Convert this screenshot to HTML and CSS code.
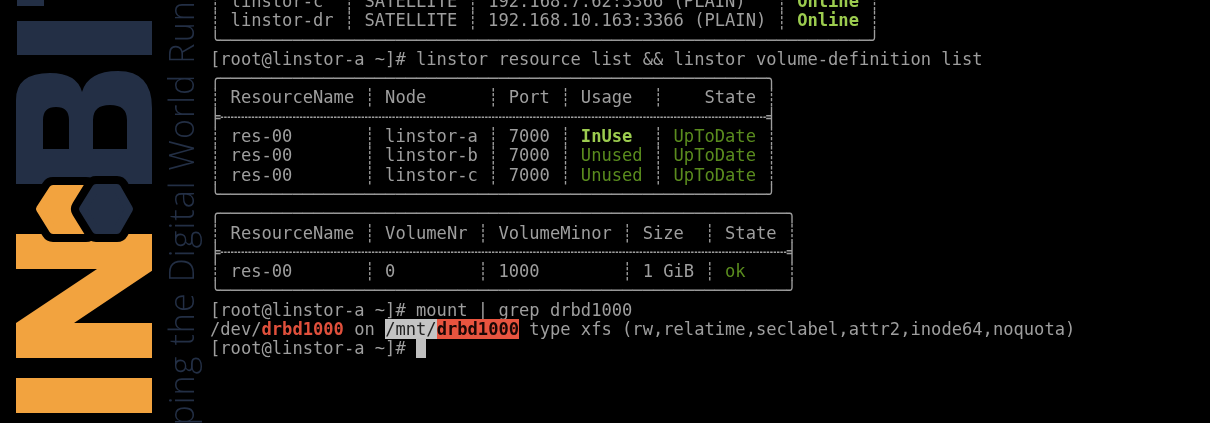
FILE: index.html
```
<!DOCTYPE html>
<html lang="en">
<head>
<meta charset="utf-8">
<title>LINSTOR terminal</title>
<link rel="stylesheet" href="styles.css">
</head>
<body>
<div class="screen">
<aside class="brand">
<svg class="logo" width="210" height="423" viewBox="0 0 210 423">
<rect class="navy" x="17" y="-10" width="27" height="16"/>
<rect class="navy" x="17" y="21" width="135" height="34"/>
<path class="navy" fill-rule="evenodd" d="M16 184V100Q16 73 50 73Q77 73 82 92Q88 71 118 71Q152 71 152 108V184ZM43 149H69V120Q69 107 56 107Q43 107 43 120ZM93 149H127V120Q127 105 110 105Q93 105 93 120Z"/>
<path class="orange" d="M16 234H152V270.700L74 323H152V358H16V323L97 269H16Z"/>
<rect class="orange" x="16" y="378" width="136" height="35"/>
<path class="halo" d="M40 209L53 189H86L98 209L86 230H53Z"/>
<path class="orange soft" d="M40 209L53 189H86L98 209L86 230H53Z"/>
<path class="halo" d="M83 209L96 188H117L129 209L117 230H96Z"/>
<path class="navy softnavy" d="M83 209L96 188H117L129 209L117 230H96Z"/>
<text class="tag" transform="translate(194 486) rotate(-90)">Keeping the Digital World Running</text>
</svg>
</aside>
<pre class="term">┊ <span>linstor-c </span> ┊ SATELLITE ┊ 192.168.7.62:3366 (PLAIN)   ┊ <b class="ok">Online</b> ┊
┊ linstor-dr ┊ SATELLITE ┊ 192.168.10.163:3366 (PLAIN) ┊ <b class="ok">Online</b> ┊
╰───────────────────────────────────────────────────────────────╯
[root@linstor-a ~]# linstor resource list &amp;&amp; linstor volume-definition list
╭─────────────────────────────────────────────────────╮
┊ ResourceName ┊ Node      ┊ Port ┊ Usage  ┊    State ┊
╞┄┄┄┄┄┄┄┄┄┄┄┄┄┄┄┄┄┄┄┄┄┄┄┄┄┄┄┄┄┄┄┄┄┄┄┄┄┄┄┄┄┄┄┄┄┄┄┄┄┄┄┄┄╡
┊ res-00       ┊ linstor-a ┊ 7000 ┊ <b class="ok">InUse</b>  ┊ <span class="good">UpToDate</span> ┊
┊ res-00       ┊ linstor-b ┊ 7000 ┊ <span class="good">Unused</span> ┊ <span class="good">UpToDate</span> ┊
┊ res-00       ┊ linstor-c ┊ 7000 ┊ <span class="good">Unused</span> ┊ <span class="good">UpToDate</span> ┊
╰─────────────────────────────────────────────────────╯
╭───────────────────────────────────────────────────────╮
┊ ResourceName ┊ VolumeNr ┊ VolumeMinor ┊ Size  ┊ State ┊
╞┄┄┄┄┄┄┄┄┄┄┄┄┄┄┄┄┄┄┄┄┄┄┄┄┄┄┄┄┄┄┄┄┄┄┄┄┄┄┄┄┄┄┄┄┄┄┄┄┄┄┄┄┄┄┄╡
┊ res-00       ┊ 0        ┊ 1000        ┊ 1 GiB ┊ <span class="good">ok</span>    ┊
╰───────────────────────────────────────────────────────╯
[root@linstor-a ~]# mount | grep drbd1000
/dev/<b class="match">drbd1000</b> on <span class="sel">/mnt/</span><b class="hit">drbd1000</b> type xfs (rw,relatime,seclabel,attr2,inode64,noquota)
[root@linstor-a ~]# <span class="cursor"> </span></pre>
</div>
</body>
</html>
```
FILE: styles.css
```
html, body {
  margin: 0;
  padding: 0;
  background: #000;
}

.screen {
  display: flex;
  width: 1210px;
  height: 423px;
  overflow: hidden;
  background: #000;
}

.brand {
  flex: 0 0 210px;
  height: 423px;
}

.logo {
  display: block;
  filter: blur(0.6px);
}

.navy { fill: #232f45; }
.orange { fill: #f2a33f; }

.halo {
  fill: #000;
  stroke: #000;
  stroke-width: 24px;
  stroke-linejoin: round;
}

.soft {
  stroke: #f2a33f;
  stroke-width: 8px;
  stroke-linejoin: round;
}

.softnavy {
  stroke: #232f45;
  stroke-width: 8px;
  stroke-linejoin: round;
}

.tag {
  fill: #232f45;
  font-family: "Open Sans", sans-serif;
  font-weight: 300;
  font-size: 34px;
  letter-spacing: 1.1px;
}

.term {
  margin: -8px 0 0;
  font-family: "DejaVu Sans Mono", monospace;
  font-size: 17.11px;
  line-height: 19.3px;
  color: #9e9e9e;
  filter: blur(0.7px);
}

.term b { font-weight: 700; }
.ok { color: #9ccc4f; }
.good { color: #5a8c1e; }
.match { color: #e0503c; }
.hit { background: #e8543f; color: #1a0705; }
.sel { background: #c4c4c4; color: #222; }
.cursor { background: #c0c0c0; }
```
